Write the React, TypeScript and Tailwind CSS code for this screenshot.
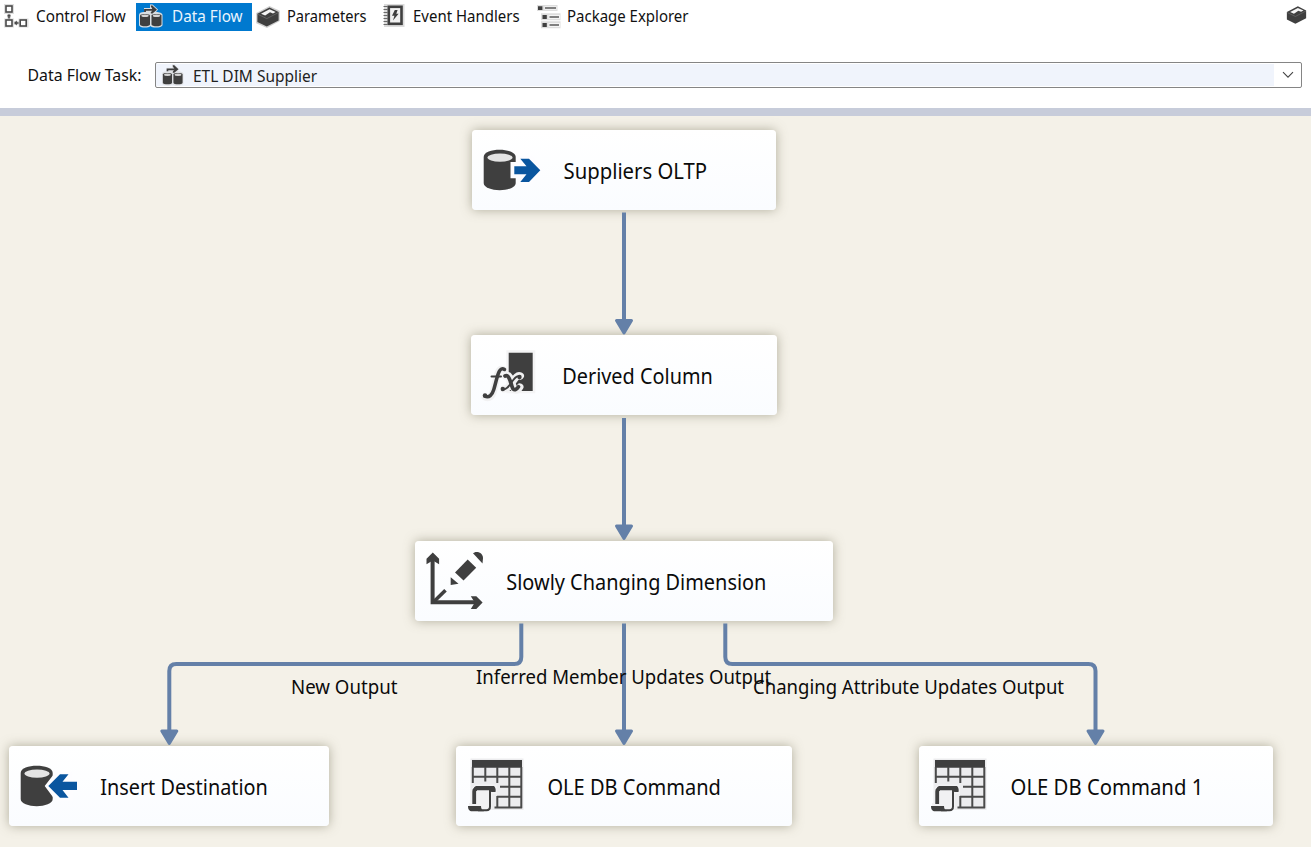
import type { ReactNode } from "react";

const DARK = "#3f3f3f";
const BLUE = "#0a569f";
const EDGE = "#6480a8";

function ControlFlowIcon() {
  return (
    <svg className="block h-[32px] w-[32px] shrink-0" viewBox="0 0 32 32" fill="none">
      <path d="M4 4h10v10H4zM4 18.5h10v9H4zM18.5 18.5H28.5v9H18.5z" fill="#dedede" />
      <path d="M7 13.500h4v6H7zM13 21h6v4h-6z" fill="#dedede" />
      <g stroke="#4a4a4a" strokeWidth="1.6">
        <rect x="6" y="6" width="6" height="6" fill="#fff" />
        <rect x="6" y="20" width="6" height="6" fill="#fff" />
        <rect x="20.2" y="20" width="6" height="6" fill="#fff" />
      </g>
      <path d="M8.2 18.5v-2.2H6.8L9 14l2.2 2.3H9.8v2.2zM18.6 22.2h-1.8v-1.6L14 23l2.8 2.4v-1.6h1.8z" fill="#4a4a4a" />
    </svg>
  );
}

function MiniCylinder({ x, y }: { x: number; y: number }) {
  return (
    <g transform={`translate(${x} ${y})`}>
      <path d="M0 2.4C0 .4 10 .4 10 2.4V11.400C10 13.8 0 13.8 0 11.400z" fill={DARK} />
      <ellipse cx="5" cy="2.700" rx="3.7" ry="1.3" fill="#d4d4d4" />
    </g>
  );
}

function DataFlowIcon({ halo, className }: { halo: string; className: string }) {
  return (
    <svg className={className} viewBox="0 0 24 24" fill="none">
      <path
        d="M.5 11c0-2 2-3 5-3V4h6V.5h2.500l5.500 5-2 2.500c3.500 0 6.500 1 6.500 3v10c0 3-10.500 3.500-12 1-2 2.500-11.500 2-11.500-1z"
        fill={halo}
      />
      <path d="M6.500 8V5.800h8" stroke={DARK} strokeWidth="1.800" />
      <path d="M12 1.800l1.600-.6 4.900 4.600-4.900 4-1.600-.7 2.200-3.300z" fill={DARK} />
      <MiniCylinder x={1.5} y={9} />
      <MiniCylinder x={13} y={9} />
    </svg>
  );
}

function BoxIcon({ className, halo }: { className: string; halo: boolean }) {
  return (
    <svg className={className} viewBox="0 0 24 22">
      {halo && <path d="M.2 7L13.500 0 23.800 4.800V15L11 22 .2 17.300z" fill="#cfcfcf" />}
      <path d="M1.400 7.700L13.500 1.500 22.600 6v8.600L10.800 20.500 1.400 16z" fill={DARK} />
      <path d="M5 7.800l8.500-4.600 6.200 2.900-2.700 1.400-3-1.200-4.800 3.200z" fill="#f4f4f4" />
      <path d="M1.600 8.200l9.200 4.400 11.600-6" fill="none" stroke="#777" strokeWidth=".6" />
    </svg>
  );
}

function EventIcon() {
  return (
    <svg className="block h-[24px] w-[22px] shrink-0" viewBox="0 0 22 24" fill="none">
      <rect x="1" y="0" width="20.500" height="23" fill="#dcdcdc" />
      <path d="M.5 2.500h4M.5 5.500h4M.5 8.500h4M.5 11.500h4M.5 14.500h4M.5 17.500h4M.5 20.500h4" stroke="#6a6a6a" strokeWidth="1.200" />
      <rect x="5.800" y="2.800" width="12.700" height="17" fill="#f1f1f1" stroke={DARK} strokeWidth="2.600" />
      <path d="M11.800 6h2.800l-1.300 3.700h2.300L10 16.500l1.400-4.700H9z" fill={DARK} />
    </svg>
  );
}

function ExplorerIcon() {
  return (
    <svg className="block h-[24px] w-[24px] shrink-0" viewBox="0 0 24 24">
      <path d="M0 0h20.500v6H0zM4 8.300h19.500v7H4zM4 16.300h19.500v7H4z" fill="#dedede" />
      <path d="M7.500 1.200h12v3.500h-12zM11.500 10h11.500v4H11.500zM11.500 18h11.500v4H11.500z" fill="#f4f4f4" />
      <path d="M1 1.200h4.400v3.800H1zM5.500 10h4.300v4H5.500zM5.500 18h4.300v4H5.500z" fill={DARK} />
      <path d="M8 3.100h11M12.500 12h9.500M12.500 20h9.500" stroke="#5a5a5a" strokeWidth="1.500" />
    </svg>
  );
}

function NodeIcon({ children }: { children: ReactNode }) {
  return (
    <svg className="block h-[80px] w-[76px] shrink-0" viewBox="0 0 76 80" fill="none">
      {children}
    </svg>
  );
}

function Cylinder() {
  return (
    <>
      <path d="M11.700 27C11.700 17.300 43.700 17.300 43.700 27V53C43.700 62.500 11.700 62.500 11.700 53z" fill={DARK} />
      <ellipse cx="28" cy="27.600" rx="12.600" ry="4.200" fill="#e4e4e4" />
    </>
  );
}

function SourceIcon() {
  return (
    <NodeIcon>
      <Cylinder />
      <path d="M38.500 32h8l-2-6.500h15L71 40.300 59.500 55h-15l2-6.700h-8z" fill="#fdfdff" />
      <path d="M42.300 36.200H54.500l-6.200-7.500h8.700l11.300 11.600L57 51.900H48.300l6.200-7.700H42.300z" fill={BLUE} />
    </NodeIcon>
  );
}

function DestinationIcon() {
  return (
    <NodeIcon>
      <Cylinder />
      <path d="M35.700 40L46.500 26h17v9h7v10h-7v9.500h-17z" fill="#fdfdff" />
      <path d="M39.300 40l11.700-11.700h8.500l-6 7.500h14.500V44H53.500l6 7.700H51z" fill={BLUE} />
    </NodeIcon>
  );
}

function FunctionIcon() {
  return (
    <NodeIcon>
      <path d="M35.300 15.300h29v43h-29z" fill="#f4f4f5" />
      <path d="M37.700 17.700h24v38.300h-24z" fill={DARK} />
      <g strokeLinecap="round" stroke="#f1f1f2" strokeWidth="7">
        <path d="M33 35C26 31.500 26 44 22.500 56c-1.500 5.500-4 8-8.500 6" />
        <path d="M34 41c7-4 7 13 10 14 2 .6 4-1 5-3M49.500 41c-6-3-9 14-17 13" />
      </g>
      <g strokeLinecap="round" stroke={DARK}>
        <path d="M33.500 34.500C27.500 30.500 26 44 22.800 54.500c-1.600 5.500-4.600 8.500-9 6.700" strokeWidth="3.500" />
        <path d="M20.500 41.500h9.500" strokeWidth="2" />
        <path d="M34 41c5-2.500 6.300 11.500 8.300 13.200 1.500 1.300 3.500 0 5.200-2.500" strokeWidth="3.700" />
        <path d="M48.500 41.500C42 39 39 56 31.500 54.500" strokeWidth="1.800" />
      </g>
      <circle cx="14" cy="60.500" r="2.200" fill={DARK} />
      <circle cx="31.800" cy="54" r="2.200" fill={DARK} />
      <circle cx="48.500" cy="42" r="2.200" fill={DARK} />
    </NodeIcon>
  );
}

function DimensionIcon() {
  return (
    <NodeIcon>
      <path d="M17.600 14v47.300H65" stroke={DARK} strokeWidth="4" />
      <path d="M17.800 11.500l6.300 6.200v5.500l-6.300-3.800-6.300 3.800v-5.500z" fill={DARK} />
      <path d="M67.600 61.500l-6.300 6.500h-5.500l4-6.500-4-6.300h5.500z" fill={DARK} />
      <path d="M19 60.500l11.500-11.300" stroke={DARK} strokeWidth="3.600" />
      <path d="M40 31.500l12.700-13 8.500 8.300L48.500 39.500z" fill={DARK} />
      <path d="M35.700 36.300l7.800 6.400-7.800 1.200z" fill={DARK} />
      <path d="M58 12.200l2.500-1.100c4.500-.5 7.500 2.400 7.500 6l-.5 5.500z" fill={DARK} />
    </NodeIcon>
  );
}

function CommandIcon() {
  return (
    <NodeIcon>
      <path d="M14.500 12.500h53v51.500h-53z" fill="#ececee" />
      <path d="M16 14h50v7.800H16z" fill={DARK} />
      <path
        d="M16.800 21v16M29.300 21v14.500M41.300 21v16M53.300 21v41M65.300 21v41.300M16 30.700h50M44 40.700h22M41 50.700h25M38.500 61.500H66M41.300 50v12"
        stroke="#4a4a4a"
        strokeWidth="2"
      />
      <path d="M13 64V57h2.500V43l3-4.500H41V48h-5v16z" fill="#f1f1f3" />
      <path d="M18.200 58V45.500c0-1.800 1-2.700 2.800-2.700" stroke={DARK} strokeWidth="3.800" />
      <path d="M18 41.800c.7-1.200 1.500-1.800 3-1.800h17c1.500 1.500 2 3.500 1.500 6h-4.200l-.8-1.800H19z" fill={DARK} />
      <path d="M34 44v16.500c0 2.500-1.200 3.700-3.500 3.700H22" stroke={DARK} strokeWidth="2" />
      <path d="M12 60h13c0 2.700 1 4.200 3 5.200H16c-2.500 0-4-1.500-4-5.200z" fill={DARK} />
    </NodeIcon>
  );
}

function Tab({ icon, label, box, scale, active }: { icon: ReactNode; label: string; box: string; scale: string; active?: boolean }) {
  return (
    <button
      className={`flex h-[28px] items-center overflow-hidden text-left ${box} ${active ? "bg-[#0079cf] text-[#e9f4fd]" : "text-[#111]"}`}
    >
      {icon}
      <span className={`-mt-[2px] block origin-left whitespace-nowrap text-[16px] leading-[24px] ${scale}`}>{label}</span>
    </button>
  );
}

function Node({ box, icon, label, scale }: { box: string; icon: ReactNode; label: string; scale: string }) {
  return (
    <div
      className={`absolute flex h-[80px] items-center rounded-[4px] bg-linear-to-b from-white to-[#fafcff] shadow-[0_0_11px_rgba(110,105,80,0.5)] ${box}`}
    >
      {icon}
      <span className={`mt-[1px] block origin-left whitespace-nowrap pl-[16.5px] text-[21.5px] leading-[30px] text-[#0b0b0b] ${scale}`}>
        {label}
      </span>
    </div>
  );
}

function EdgeLabel({ box, label }: { box: string; label: string }) {
  return (
    <span className={`absolute block origin-left whitespace-nowrap text-[20.5px] leading-[24px] text-[#0b0b0b] ${box}`}>{label}</span>
  );
}

function Arrow({ x, y }: { x: number; y: number }) {
  return (
    <path
      d={`M${x - 7.5} ${y - 14.5}h15L${x} ${y - 2}z`}
      fill={EDGE}
      stroke={EDGE}
      strokeWidth="3"
      strokeLinejoin="round"
    />
  );
}

export default function App() {
  return (
    <div className="flex h-[847px] w-[1311px] flex-col overflow-hidden bg-white font-['Noto_Sans','Liberation_Sans',sans-serif]">
      <header className="flex h-[108px] shrink-0 flex-col">
        <nav className="flex h-[34px] items-start pt-[3px]">
          <Tab
            box="w-[136px]"
            label="Control Flow"
            scale="ml-[4px] scale-x-[0.955]"
            icon={<div className="-mt-[2px]"><ControlFlowIcon /></div>}
          />
          <Tab
            active
            box="w-[116px] pl-[2px]"
            label="Data Flow"
            scale="ml-[8.5px] scale-x-[0.955]"
            icon={<DataFlowIcon halo="#d9dee2" className="-mt-[3px] block h-[24px] w-[25px] shrink-0" />}
          />
          <Tab
            box="w-[131px] pl-[4px]"
            label="Parameters"
            scale="ml-[7px] scale-x-[0.914]"
            icon={<BoxIcon halo className="block h-[22px] w-[24px] shrink-0" />}
          />
          <Tab
            box="w-[154px]"
            label="Event Handlers"
            scale="ml-[8px] scale-x-[0.936]"
            icon={<div className="-mt-[2px]"><EventIcon /></div>}
          />
          <Tab
            box="w-[170px]"
            label="Package Explorer"
            scale="ml-[6px] scale-x-[0.936]"
            icon={<div className="-mt-[1px]"><ExplorerIcon /></div>}
          />
          <div className="ml-auto mr-[3px] mt-[2px]">
            <BoxIcon halo={false} className="block h-[20px] w-[23px]" />
          </div>
        </nav>
        <div className="flex pl-[27px] pt-[28px]">
          <span className="mt-[1px] block h-[24px] w-[128px] origin-left whitespace-nowrap text-[16px] leading-[25px] text-[#111]">
            <span className="block origin-left scale-x-[0.99] pl-[0.5px]">Data Flow Task:</span>
          </span>
          <div className="flex h-[26px] w-[1147px] items-stretch rounded-[2px] border border-[#858585] bg-white py-px">
            <div className="flex w-[1118px] items-center bg-[#f0f4fc] pl-[4px]">
              <DataFlowIcon halo="#dfe1e5" className="-mt-[1px] block h-[22px] w-[25px] shrink-0" />
              <span className="ml-[8px] mt-[2px] block origin-left scale-x-[0.967] whitespace-nowrap text-[16px] leading-[22px] text-[#222]">
                ETL DIM Supplier
              </span>
            </div>
            <div className="flex flex-1 items-center justify-center">
              <svg className="block h-[8px] w-[12px]" viewBox="0 0 12 8" fill="none">
                <path d="M1 1.200l5 5 5-5" stroke="#444" strokeWidth="1.100" />
              </svg>
            </div>
          </div>
        </div>
      </header>
      <div className="h-[8px] shrink-0 bg-[#c7ccda]" />
      <main className="relative min-h-0 flex-1 overflow-hidden bg-[#f4f1e8]">
        <Node box="left-[472px] top-[14px] w-[304px]" icon={<SourceIcon />} label="Suppliers OLTP" scale="scale-x-[0.943]" />
        <Node box="left-[471px] top-[219px] w-[306px]" icon={<FunctionIcon />} label="Derived Column" scale="scale-x-[0.924]" />
        <Node box="left-[415px] top-[425px] w-[418px]" icon={<DimensionIcon />} label="Slowly Changing Dimension" scale="scale-x-[0.926]" />
        <Node box="left-[9px] top-[630px] w-[320px]" icon={<DestinationIcon />} label="Insert Destination" scale="scale-x-[0.923]" />
        <Node box="left-[456px] top-[630px] w-[336px]" icon={<CommandIcon />} label="OLE DB Command" scale="scale-x-[0.932]" />
        <Node box="left-[919px] top-[630px] w-[354px]" icon={<CommandIcon />} label="OLE DB Command 1" scale="scale-x-[0.944]" />

        <svg className="absolute left-0 top-0 block h-[731px] w-[1311px]" viewBox="0 116 1311 731" fill="none">
          <g stroke={EDGE} strokeWidth="4">
            <path d="M624 212.500V322" />
            <path d="M624 418V527" />
            <path d="M624 623.500V733" />
            <path d="M521.300 623.500V657q0 7-7 7H176.300q-7 0-7 7V733" />
            <path d="M725.300 623.500V657q0 7 7 7H1088.500q7 0 7 7V733" />
          </g>
          <Arrow x={624} y={335} />
          <Arrow x={624} y={540.5} />
          <Arrow x={624} y={745.5} />
          <Arrow x={169.3} y={745.5} />
          <Arrow x={1095.5} y={745.5} />
        </svg>

        <EdgeLabel box="left-[291px] top-[558px] scale-x-[0.910]" label="New Output" />
        <EdgeLabel box="left-[475.500px] top-[548px] scale-x-[0.905]" label="Inferred Member Updates Output" />
        <EdgeLabel box="left-[752.500px] top-[558px] scale-x-[0.904]" label="Changing Attribute Updates Output" />
      </main>
    </div>
  );
}
